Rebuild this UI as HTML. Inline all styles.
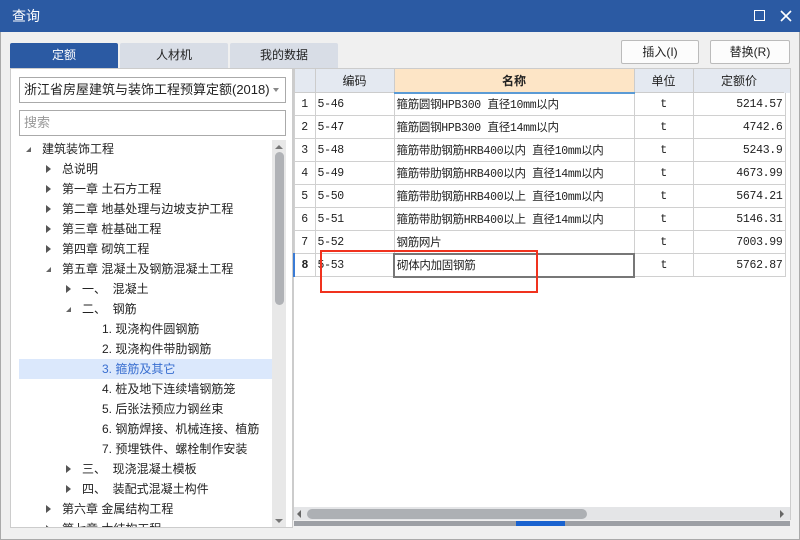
<!DOCTYPE html>
<html><head><meta charset="utf-8"><style>
*{box-sizing:border-box;margin:0;padding:0}
body{width:800px;height:540px;overflow:hidden;background:#f0f0f0;font-family:"Liberation Sans","Noto Sans CJK SC",sans-serif;font-size:12px;color:#222;position:relative}
.abs{position:absolute}
.title{left:0;top:0;width:800px;height:32px;background:#2b5aa3;color:#fff;font-size:14px;line-height:32px;padding-left:12px}
.tab{top:43px;height:25px;width:108px;text-align:center;line-height:25px;font-size:12px;background:#d8dde6;border-radius:2px 2px 0 0}
.panel{left:10px;top:68px;width:283px;height:460px;background:#fff;border:1px solid #ccc}
.inp{border:1px solid #aaa;background:#fff;height:26px;line-height:24px;padding-left:4px}
.tree div{position:absolute;height:20px;line-height:20px;white-space:nowrap;font-size:12px}
.tri{position:absolute;width:0;height:0;border-top:4px solid transparent;border-bottom:4px solid transparent;border-left:5px solid #555;top:6px}
.dtri{position:absolute;width:0;height:0;border-left:5px solid transparent;border-bottom:5px solid #666;top:8px}
table{border-collapse:collapse;table-layout:fixed}
td{border:1px solid #d0d0d0;height:23px;font-family:"Liberation Mono","Noto Sans CJK SC",monospace;font-size:11.5px;letter-spacing:-0.3px;white-space:nowrap;overflow:hidden;padding:0 2px}
th{height:24px;background:#e4e9f1;font-weight:normal;border:1px solid #ccc;font-size:12px}
.btn{top:40px;height:24px;border:1px solid #bbb;background:#fcfcfc;border-radius:2px;text-align:center;line-height:22px;font-size:12px}
</style></head><body>
<div class="abs title">查询</div>
<div class="abs" style="left:754px;top:10px;width:11px;height:11px;border:1.5px solid #fff"></div>
<svg class="abs" style="left:780px;top:10px" width="12" height="12"><path d="M1 1L11 11M11 1L1 11" stroke="#fff" stroke-width="1.6"/></svg>
<div class="abs tab" style="left:10px;background:#2b5aa3;color:#fff">定额</div>
<div class="abs tab" style="left:120px">人材机</div>
<div class="abs tab" style="left:230px">我的数据</div>
<div class="abs btn" style="left:621px;width:78px">插入(I)</div>
<div class="abs btn" style="left:710px;width:80px">替换(R)</div>
<div class="abs panel"></div>
<div class="abs inp" style="left:19px;top:77px;width:267px;font-size:13px">浙江省房屋建筑与装饰工程预算定额(2018)</div>
<div class="abs" style="left:273px;top:88px;border-left:3px solid transparent;border-right:3px solid transparent;border-top:4px solid #888"></div>
<div class="abs inp" style="left:19px;top:110px;width:267px;color:#999;font-size:13px">搜索</div>
<div class="abs" style="left:19px;top:359px;width:253px;height:20px;background:#dbe8fc"></div>
<div class="abs" style="left:0;top:0;width:272px;height:527px;overflow:hidden">
<div class="tree" style="position:absolute;left:0;top:0">
<div style="top:139px;left:26px"><span class="dtri" style="left:0"></span><span style="margin-left:16px">建筑装饰工程</span></div>
<div style="top:159px;left:46px"><span class="tri" style="left:0"></span><span style="margin-left:16px">总说明</span></div>
<div style="top:179px;left:46px"><span class="tri" style="left:0"></span><span style="margin-left:16px">第一章 土石方工程</span></div>
<div style="top:199px;left:46px"><span class="tri" style="left:0"></span><span style="margin-left:16px">第二章 地基处理与边坡支护工程</span></div>
<div style="top:219px;left:46px"><span class="tri" style="left:0"></span><span style="margin-left:16px">第三章 桩基础工程</span></div>
<div style="top:239px;left:46px"><span class="tri" style="left:0"></span><span style="margin-left:16px">第四章 砌筑工程</span></div>
<div style="top:259px;left:46px"><span class="dtri" style="left:0"></span><span style="margin-left:16px">第五章 混凝土及钢筋混凝土工程</span></div>
<div style="top:279px;left:66px"><span class="tri" style="left:0"></span><span style="margin-left:16px">一、&nbsp;&nbsp;混凝土</span></div>
<div style="top:299px;left:66px"><span class="dtri" style="left:0"></span><span style="margin-left:16px">二、&nbsp;&nbsp;钢筋</span></div>
<div style="top:319px;left:102px">1. 现浇构件圆钢筋</div>
<div style="top:339px;left:102px">2. 现浇构件带肋钢筋</div>
<div style="top:359px;left:102px;color:#3a6fd0">3. 箍筋及其它</div>
<div style="top:379px;left:102px">4. 桩及地下连续墙钢筋笼</div>
<div style="top:399px;left:102px">5. 后张法预应力钢丝束</div>
<div style="top:419px;left:102px">6. 钢筋焊接、机械连接、植筋</div>
<div style="top:439px;left:102px">7. 预埋铁件、螺栓制作安装</div>
<div style="top:459px;left:66px"><span class="tri" style="left:0"></span><span style="margin-left:16px">三、&nbsp;&nbsp;现浇混凝土模板</span></div>
<div style="top:479px;left:66px"><span class="tri" style="left:0"></span><span style="margin-left:16px">四、&nbsp;&nbsp;装配式混凝土构件</span></div>
<div style="top:499px;left:46px"><span class="tri" style="left:0"></span><span style="margin-left:16px">第六章 金属结构工程</span></div>
<div style="top:519px;left:46px"><span class="tri" style="left:0"></span><span style="margin-left:16px">第七章 木结构工程</span></div>
</div></div>
<div class="abs" style="left:272px;top:140px;width:14px;height:387px;background:#e8e8e8"></div>
<div class="abs" style="left:275px;top:152px;width:9px;height:153px;background:#b0b2b6;border-radius:5px"></div>
<div class="abs" style="left:275px;top:145px;border-left:4px solid transparent;border-right:4px solid transparent;border-bottom:4px solid #777"></div>
<div class="abs" style="left:275px;top:519px;border-left:4px solid transparent;border-right:4px solid transparent;border-top:4px solid #777"></div>
<div class="abs" style="left:293px;top:68px;width:498px;height:452px;background:#fff;border:1px solid #ccc"></div>
<table class="abs" style="left:293px;top:68px;width:491px">
<colgroup><col style="width:21px"><col style="width:79px"><col style="width:240px"><col style="width:59px"><col style="width:92px"></colgroup>
<tr><th></th><th>编码</th><th style="background:#fde5c6;font-weight:bold;border-bottom:2px solid #5b9bd5">名称</th><th>单位</th><th>定额价</th></tr>
<tr><td style="text-align:center">1</td><td>5-46</td><td>箍筋圆钢HPB300 直径10mm以内</td><td style="text-align:center">t</td><td style="text-align:right">5214.57</td></tr>
<tr><td style="text-align:center">2</td><td>5-47</td><td>箍筋圆钢HPB300 直径14mm以内</td><td style="text-align:center">t</td><td style="text-align:right">4742.6</td></tr>
<tr><td style="text-align:center">3</td><td>5-48</td><td>箍筋带肋钢筋HRB400以内 直径10mm以内</td><td style="text-align:center">t</td><td style="text-align:right">5243.9</td></tr>
<tr><td style="text-align:center">4</td><td>5-49</td><td>箍筋带肋钢筋HRB400以内 直径14mm以内</td><td style="text-align:center">t</td><td style="text-align:right">4673.99</td></tr>
<tr><td style="text-align:center">5</td><td>5-50</td><td>箍筋带肋钢筋HRB400以上 直径10mm以内</td><td style="text-align:center">t</td><td style="text-align:right">5674.21</td></tr>
<tr><td style="text-align:center">6</td><td>5-51</td><td>箍筋带肋钢筋HRB400以上 直径14mm以内</td><td style="text-align:center">t</td><td style="text-align:right">5146.31</td></tr>
<tr><td style="text-align:center">7</td><td>5-52</td><td>钢筋网片</td><td style="text-align:center">t</td><td style="text-align:right">7003.99</td></tr>
<tr><td style="text-align:center;font-weight:bold;border-left:2px solid #3a7bd5">8</td><td>5-53</td><td style="border:2px solid #777">砌体内加固钢筋</td><td style="text-align:center">t</td><td style="text-align:right">5762.87</td></tr>
</table>
<div class="abs" style="left:784px;top:69px;width:6px;height:24px;background:#e4e9f1"></div>
<div class="abs" style="left:320px;top:250px;width:218px;height:43px;border:2px solid #f0321e"></div>
<div class="abs" style="left:294px;top:507px;width:496px;height:13px;background:#e4e5e7"></div>
<div class="abs" style="left:307px;top:509px;width:280px;height:10px;background:#adb0b4;border-radius:5px"></div>
<div class="abs" style="left:297px;top:510px;border-top:4px solid transparent;border-bottom:4px solid transparent;border-right:4px solid #666"></div>
<div class="abs" style="left:780px;top:510px;border-top:4px solid transparent;border-bottom:4px solid transparent;border-left:4px solid #666"></div>
<div class="abs" style="left:294px;top:521px;width:496px;height:5px;background:#9da0a5"></div>
<div class="abs" style="left:516px;top:521px;width:49px;height:5px;background:#1a63cf"></div>
<div class="abs" style="left:0;top:32px;width:1px;height:508px;background:#aaa"></div>
<div class="abs" style="left:799px;top:32px;width:1px;height:508px;background:#aaa"></div>
<div class="abs" style="left:0;top:539px;width:800px;height:1px;background:#aaa"></div>
</body></html>
